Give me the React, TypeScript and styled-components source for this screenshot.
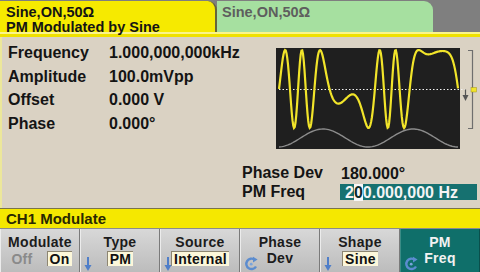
import React from "react";
import styled, { createGlobalStyle } from "styled-components";

const GlobalStyle = createGlobalStyle`
  html, body {
    margin: 0;
    padding: 0;
    background: #7f7f7f;
  }
  body {
    font-family: "Liberation Sans", Arial, sans-serif;
  }
  #root {
    width: 480px;
    height: 272px;
    overflow: hidden;
  }
`;

const Screen = styled.div`
  width: 480px;
  height: 272px;
  display: flex;
  flex-direction: column;
  background: #7f7f7f;
  font-weight: bold;
  color: #141414;
`;

const TabBar = styled.div`
  display: flex;
  height: 32px;
  padding-top: 1px;
  box-sizing: border-box;
`;

const Tab = styled.div<{ $active?: boolean }>`
  box-sizing: border-box;
  width: ${(p) => (p.$active ? "217px" : "216px")};
  padding: 4px 0 0 ${(p) => (p.$active ? "6px" : "5px")};
  background: ${(p) => (p.$active ? "#f6ea00" : "#a6e0a0")};
  color: ${(p) => (p.$active ? "#141414" : "#5e5e5e")};
  border-right: ${(p) => (p.$active ? "2px solid #66643a" : "none")};
  border-top-right-radius: 9px;
  font-size: 14.5px;
  line-height: 15px;
  position: relative;
  z-index: ${(p) => (p.$active ? 2 : 1)};
`;

const TabStripe = styled.div`
  height: 3px;
  border-top: 2px solid #fbf58a;
  background: #efe100;
`;

const Panel = styled.div`
  height: 171px;
  display: flex;
  flex-direction: column;
  background: #dad2c3;
  border-left: 2px solid #ece79a;
  padding-left: 6px;
`;

const TopRow = styled.div`
  display: flex;
  justify-content: space-between;
  align-items: flex-start;
`;

const ParamList = styled.div`
  display: grid;
  grid-template-columns: 101px auto;
  margin-top: 4px;
  font-size: 16px;
  line-height: 23.5px;
`;

const Scope = styled.svg`
  display: block;
  margin-top: 11px;
`;

const ModList = styled.div`
  display: grid;
  grid-template-columns: 98px 137px;
  grid-auto-rows: 19px;
  align-items: center;
  margin: 13px 0 0 234px;
  font-size: 16px;
`;

const ModValue = styled.span<{ $edit?: boolean }>`
  display: block;
  height: 16px;
  line-height: 17px;
  padding-left: ${(p) => (p.$edit ? "5px" : "1px")};
  background: ${(p) => (p.$edit ? "#167170" : "transparent")};
  color: ${(p) => (p.$edit ? "#f4f4f4" : "inherit")};
`;

const Cursor = styled.span`
  background: #f8f8f8;
  color: #0c2a2a;
`;

const StatusBar = styled.div`
  height: 19px;
  line-height: 19px;
  border-top: 1px solid #7a7448;
  border-bottom: 1px solid #8c8c8c;
  background: #f5e800;
  padding-left: 6px;
  font-size: 15px;
  color: #2a2800;
`;

const SoftkeyBar = styled.div`
  flex: 1;
  display: grid;
  grid-template-columns: repeat(6, 80px);
`;

const Softkey = styled.div<{ $selected?: boolean }>`
  position: relative;
  box-sizing: border-box;
  display: flex;
  flex-direction: column;
  align-items: center;
  padding-top: 5px;
  background: ${(p) =>
    p.$selected ? "#0f6f6a" : "linear-gradient(#d8d8d8, #bcbcbc)"};
  border-left: 1px solid ${(p) => (p.$selected ? "#3a8c86" : "#ececec")};
  border-right: 1px solid ${(p) => (p.$selected ? "#0a4f4b" : "#7a7a7a")};
  color: ${(p) => (p.$selected ? "#f2f2f2" : "#1c1c1c")};
  font-size: 14px;
  line-height: 16px;
  letter-spacing: 0.3px;
`;

const KeyLine = styled.div`
  display: flex;
  align-items: center;
  gap: 12px;
  height: 16px;
`;

const Option = styled.span<{ $on?: boolean }>`
  padding: 0 2px;
  line-height: 14px;
  font-size: 14px;
  color: ${(p) => (p.$on ? "#111" : "#8a8a8a")};
  background: ${(p) => (p.$on ? "#fcf7da" : "transparent")};
  border-top: 1px solid ${(p) => (p.$on ? "#8d8672" : "transparent")};
  border-left: 1px solid ${(p) => (p.$on ? "#8d8672" : "transparent")};
`;

const KeyIcon = styled.svg`
  position: absolute;
  left: 3px;
  bottom: 1px;
`;

const DownArrow = () => (
  <KeyIcon width="8" height="14" viewBox="0 0 8 14">
    <line x1="4" y1="0" x2="4" y2="10" stroke="#4f7ec9" strokeWidth="2" />
    <polygon points="0.5,8 7.5,8 4,14" fill="#4f7ec9" />
  </KeyIcon>
);

const RotateIcon = () => (
  <KeyIcon width="15" height="15" viewBox="0 0 15 15">
    <path
      d="M10.5 3.6 A5.2 5.2 0 1 0 12 10.5"
      fill="none"
      stroke="#5b8ccf"
      strokeWidth="2.4"
    />
    <polygon points="9,0.8 13.6,3.6 9,6.4" fill="#5b8ccf" />
    <circle cx="7.2" cy="8.2" r="1.4" fill="#7aa4dc" />
  </KeyIcon>
);

const params = [
  ["Frequency", "1.000,000,000kHz"],
  ["Amplitude", "100.0mVpp"],
  ["Offset", "0.000 V"],
  ["Phase", "0.000°"],
];

// PM wave: carrier phase plus pi * modulating sine
const wave = Array.from({ length: 240 }, (_, i) => {
  const x = 279 + (i * (458 - 279)) / 239;
  const phi =
    0.193 * (x - 279) +
    Math.PI * Math.sin((2 * Math.PI * (x - 300.5)) / 90) +
    3.134;
  return `${(x - 276).toFixed(2)},${(41 - 39 * Math.sin(phi)).toFixed(2)}`;
}).join(" ");

const modWave = Array.from({ length: 120 }, (_, i) => {
  const x = 279 + (i * (458 - 279)) / 119;
  const y = 90 - 9 * Math.sin((2 * Math.PI * (x - 300.5)) / 90);
  return `${(x - 276).toFixed(2)},${y.toFixed(2)}`;
}).join(" ");

const ScopeView = () => (
  <Scope width="204" height="102" viewBox="0 0 204 102">
    <rect x="0" y="0" width="184" height="101" fill="#1f1f1f" />
    <polyline points={modWave} fill="none" stroke="#8c8c8c" strokeWidth="1.4" />
    <line
      x1="3"
      y1="41.5"
      x2="189"
      y2="41.5"
      stroke="#f2f2f2"
      strokeWidth="1"
      strokeDasharray="1.5 2"
    />
    <polyline points={wave} fill="none" stroke="#f1e42a" strokeWidth="2.2" />
    <line x1="189.5" y1="41.5" x2="189.5" y2="49" stroke="#555" strokeWidth="1.2" />
    <polygon points="186.5,47 192.5,47 189.5,53" fill="#555" />
    <polyline
      points="192,2.5 196.5,2.5 196.5,80.5 192,80.5"
      fill="none"
      stroke="#6e6e6e"
      strokeWidth="1.2"
    />
    <rect x="195" y="39.5" width="5.5" height="4.5" fill="#f1e42a" stroke="#a09420" strokeWidth="0.5" />
  </Scope>
);

export default function App() {
  return (
    <>
      <GlobalStyle />
      <Screen>
        <TabBar>
          <Tab $active>
            Sine,ON,50Ω
            <br />
            PM Modulated by Sine
          </Tab>
          <Tab>Sine,ON,50Ω</Tab>
        </TabBar>
        <TabStripe />
        <Panel>
          <TopRow>
            <ParamList>
              {params.map(([label, value]) => (
                <React.Fragment key={label}>
                  <span>{label}</span>
                  <span>{value}</span>
                </React.Fragment>
              ))}
            </ParamList>
            <ScopeView />
          </TopRow>
          <ModList>
            <span>Phase Dev</span>
            <ModValue>180.000°</ModValue>
            <span>PM Freq</span>
            <ModValue $edit>
              2<Cursor>0</Cursor>0.000,000 Hz
            </ModValue>
          </ModList>
        </Panel>
        <StatusBar>CH1 Modulate</StatusBar>
        <SoftkeyBar>
          <Softkey>
            Modulate
            <KeyLine>
              <Option>Off</Option>
              <Option $on>On</Option>
            </KeyLine>
          </Softkey>
          <Softkey>
            Type
            <KeyLine>
              <Option $on>PM</Option>
            </KeyLine>
            <DownArrow />
          </Softkey>
          <Softkey>
            Source
            <KeyLine>
              <Option $on>Internal</Option>
            </KeyLine>
            <DownArrow />
          </Softkey>
          <Softkey>
            Phase
            <KeyLine>Dev</KeyLine>
            <RotateIcon />
          </Softkey>
          <Softkey>
            Shape
            <KeyLine>
              <Option $on>Sine</Option>
            </KeyLine>
            <DownArrow />
          </Softkey>
          <Softkey $selected>
            PM
            <KeyLine>Freq</KeyLine>
            <RotateIcon />
          </Softkey>
        </SoftkeyBar>
      </Screen>
    </>
  );
}
